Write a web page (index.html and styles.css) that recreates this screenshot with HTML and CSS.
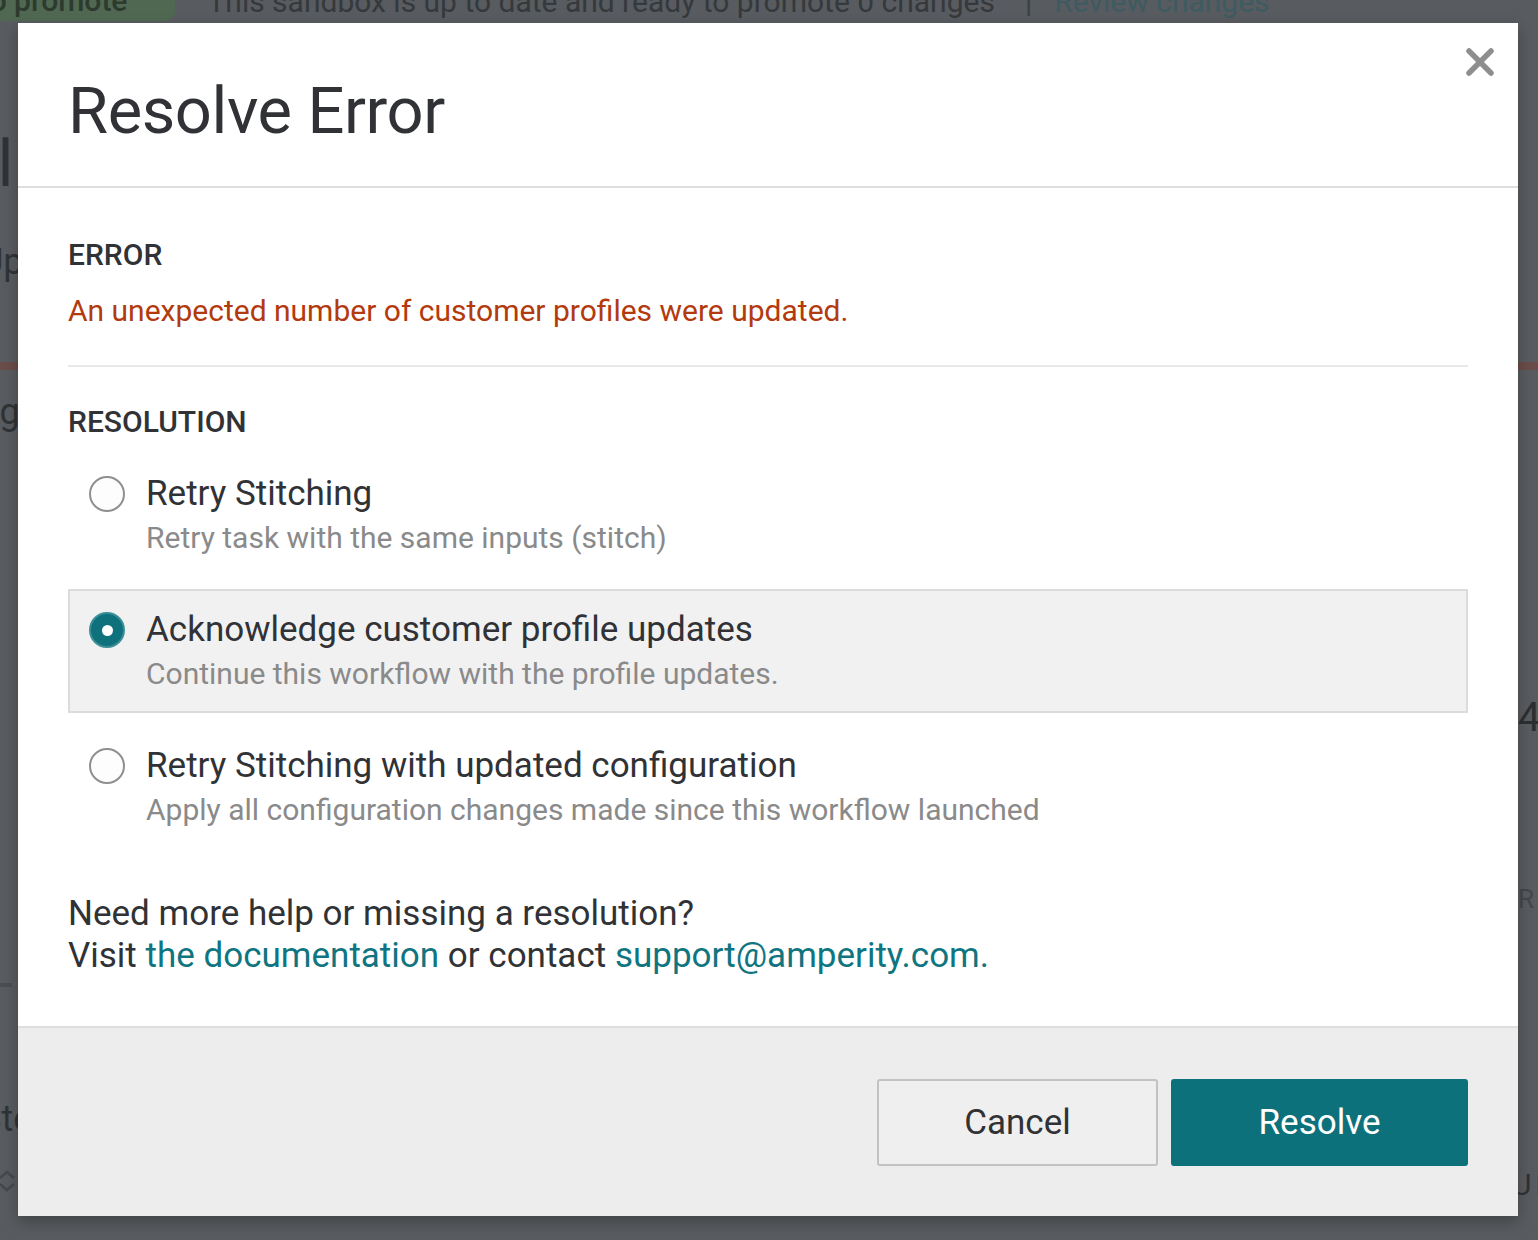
FILE: index.html
```html
<!DOCTYPE html>
<html lang="en">
<head>
<meta charset="utf-8">
<title>Resolve Error</title>
<link rel="stylesheet" href="styles.css">
</head>
<body>
<div class="page">
  <div class="topbar">
    <span class="promote-btn">to promote</span>
    <span class="sandbox-msg">This sandbox is up to date and ready to promote 0 changes</span>
    <span class="sep">|</span>
    <span class="review">Review changes</span>
  </div>
  <div class="page-main">
    <div class="side side-left">
      <div class="big">All</div>
      <div class="mid">Up</div>
      <div class="redbar"></div>
      <div class="mid g">Sg</div>
      <div class="dash"></div>
      <div class="mid te">Ste</div>
      <svg class="chev" width="18" height="24" viewBox="0 0 18 24"><path d="M2 9 L9 3 L16 9 M2 15 L9 21 L16 15" stroke="#46494c" stroke-width="2.5" fill="none"/></svg>
    </div>
    <div class="center-space"></div>
    <div class="side side-right">
      <div class="redbar r"></div>
      <div class="num">4</div>
      <div class="cap">RE</div>
      <div class="cap un">UN</div>
    </div>
  </div>
</div>

<div class="overlay">
  <div class="modal" role="dialog" aria-labelledby="modal-title">
    <div class="modal-header">
      <h1 id="modal-title" class="modal-title">Resolve Error</h1>
      <button class="close-btn" aria-label="Close">
        <svg width="30" height="30" viewBox="0 0 30 30"><path d="M4 4 L26 26 M26 4 L4 26" stroke="#8e8e8e" stroke-width="5.5" stroke-linecap="round" fill="none"/></svg>
      </button>
    </div>
    <div class="modal-body">
      <div class="section-label">ERROR</div>
      <p class="error-msg">An unexpected number of customer profiles were updated.</p>
      <hr class="divider">
      <div class="section-label res-label">RESOLUTION</div>
      <div class="options">
        <label class="option">
          <span class="radio"></span>
          <span class="option-text">
            <span class="option-title">Retry Stitching</span>
            <span class="option-desc">Retry task with the same inputs (stitch)</span>
          </span>
        </label>
        <label class="option selected">
          <span class="radio checked"></span>
          <span class="option-text">
            <span class="option-title">Acknowledge customer profile updates</span>
            <span class="option-desc">Continue this workflow with the profile updates.</span>
          </span>
        </label>
        <label class="option">
          <span class="radio"></span>
          <span class="option-text">
            <span class="option-title">Retry Stitching with updated configuration</span>
            <span class="option-desc">Apply all configuration changes made since this workflow launched</span>
          </span>
        </label>
      </div>
      <p class="help">Need more help or missing a resolution?<br>Visit <a href="#">the documentation</a> or contact <a href="#">support@amperity.com.</a></p>
    </div>
    <div class="modal-footer">
      <button class="btn btn-cancel">Cancel</button>
      <button class="btn btn-primary">Resolve</button>
    </div>
  </div>
</div>
</body>
</html>
```

FILE: styles.css
```css
* { box-sizing: border-box; }
html, body { margin: 0; padding: 0; }
body {
  width: 1538px;
  height: 1240px;
  overflow: hidden;
  background: #585b5f;
  font-family: Roboto, "Liberation Sans", Arial, sans-serif;
  color: #303236;
  position: relative;
}

/* underlying (dimmed) page */
.page { width: 1538px; height: 1240px; }
.topbar {
  height: 40px;
  margin-top: -19px;
  display: flex;
  align-items: center;
  font-size: 30px;
  color: #36393c;
  white-space: nowrap;
}
.promote-btn {
  background: #506852;
  color: #2d3a2e;
  font-weight: 500;
  padding: 0 48px 0 0;
  margin-left: -20px;
  border-radius: 0 10px 10px 0;
  height: 40px;
  line-height: 40px;
}
.sandbox-msg { margin-left: 32px; }
.sep { margin: 0 22px 0 30px; color: #3d4043; }
.review { color: #3d5b61; }

.page-main { display: flex; height: 1219px; }
.side { overflow: hidden; display: flex; flex-direction: column; color: #303336; }
.center-space { flex: 1; }
.side-left { width: 18px; }
.side-left .big { font-size: 64px; line-height: 64px; margin-top: 112px; margin-left: -44px; white-space: nowrap; }
.side-left .mid { font-size: 36px; line-height: 40px; margin-top: 45px; margin-left: -20px; white-space: nowrap; }
.side-left .g { margin-top: 22px; margin-left: -22px; }
.side-left .te { margin-top: 112px; margin-left: -20px; }
.side-left .dash { flex: none; width: 12px; height: 4px; background: #4b4e51; margin-top: 551px; }
.side-left .chev { flex: none; margin-top: 30px; margin-left: -2px; }
.redbar { flex: none; height: 8px; background: #6a4d48; width: 40px; }
.side-left .redbar { margin-top: 80px; }
.side-right { width: 20px; }
.side-right .redbar.r { margin-top: 341px; }
.side-right .num { font-size: 40px; line-height: 40px; margin-top: 328px; color: #2c2f32; }
.side-right .cap { font-size: 26px; line-height: 30px; letter-spacing: 4px; margin-top: 146px; color: #444749; white-space: nowrap; }
.side-right .un { margin-top: 256px; font-size: 30px; color: #2f3235; margin-left: -6px; }

/* overlay + modal */
.overlay {
  position: absolute;
  top: 0; left: 0; right: 0; bottom: 0;
  padding: 23px 0 0 18px;
}
.modal {
  width: 1500px;
  background: #fff;
  box-shadow: 0 6px 14px rgba(0,0,0,0.25);
}
.modal-header {
  height: 165px;
  border-bottom: 2px solid #dedede;
  display: flex;
  align-items: flex-start;
  justify-content: space-between;
  padding: 0 23px 0 50px;
}
.modal-title {
  margin: 0;
  padding-top: 50px;
  font-size: 65px;
  line-height: 76px;
  font-weight: 400;
  color: #303236;
  letter-spacing: -0.4px;
}
.close-btn {
  border: 0;
  background: none;
  padding: 0;
  margin-top: 24px;
  width: 30px; height: 30px;
  cursor: pointer;
}
.close-btn svg { display: block; }

.modal-body { padding: 47px 50px 49px; }
.section-label {
  font-size: 30px;
  line-height: 40px;
  font-weight: 500;
  color: #303236;
}
.error-msg {
  margin: 16px 0 0;
  font-size: 30px;
  line-height: 40px;
  color: #b33a0d;
}
.divider {
  border: 0;
  border-top: 2px solid #e8e8e8;
  margin: 34px 0 0;
}
.res-label { margin-top: 35px; }
.options { display: flex; flex-direction: column; gap: 12px; margin-top: 11px; }
.option {
  display: flex;
  align-items: flex-start;
  padding: 17px 19px 15px;
  border: 2px solid transparent;
  cursor: pointer;
}
.option.selected { background: #f1f1f1; border-color: #dcdcdc; }
.radio {
  flex: none;
  width: 36px; height: 36px;
  border-radius: 50%;
  border: 2px solid #8f8f8f;
  background: #fdfdfd;
  margin-top: 4px;
  margin-right: 21px;
}
.radio.checked {
  background: #0f717c;
  border: 2px solid #3a8e97;
  position: relative;
}
.radio.checked::after {
  content: "";
  position: absolute;
  left: 50%; top: 50%;
  width: 11px; height: 11px;
  margin: -5.5px 0 0 -5.5px;
  border-radius: 50%;
  background: #fff;
}
.option-text { display: flex; flex-direction: column; }
.option-title { font-size: 35px; line-height: 44px; color: #303236; }
.option-desc { font-size: 30px; line-height: 44px; color: #8a8a8a; }

.help {
  margin: 44px 0 0;
  font-size: 35px;
  line-height: 42px;
  color: #303236;
}
.help a { color: #0f7580; text-decoration: none; }

.modal-footer {
  border-top: 2px solid #dedede;
  background: #ededed;
  height: 190px;
  display: flex;
  justify-content: flex-end;
  align-items: center;
  gap: 13px;
  padding: 0 50px 0 0;
}
.btn {
  height: 87px;
  font-family: inherit;
  font-size: 35px;
  border-radius: 3px;
  cursor: pointer;
}
.btn-cancel {
  width: 281px;
  background: #efefef;
  border: 2px solid #c2c2c2;
  color: #303236;
}
.btn-primary {
  width: 297px;
  background: #0d717c;
  border: 0;
  color: #fff;
}
```
